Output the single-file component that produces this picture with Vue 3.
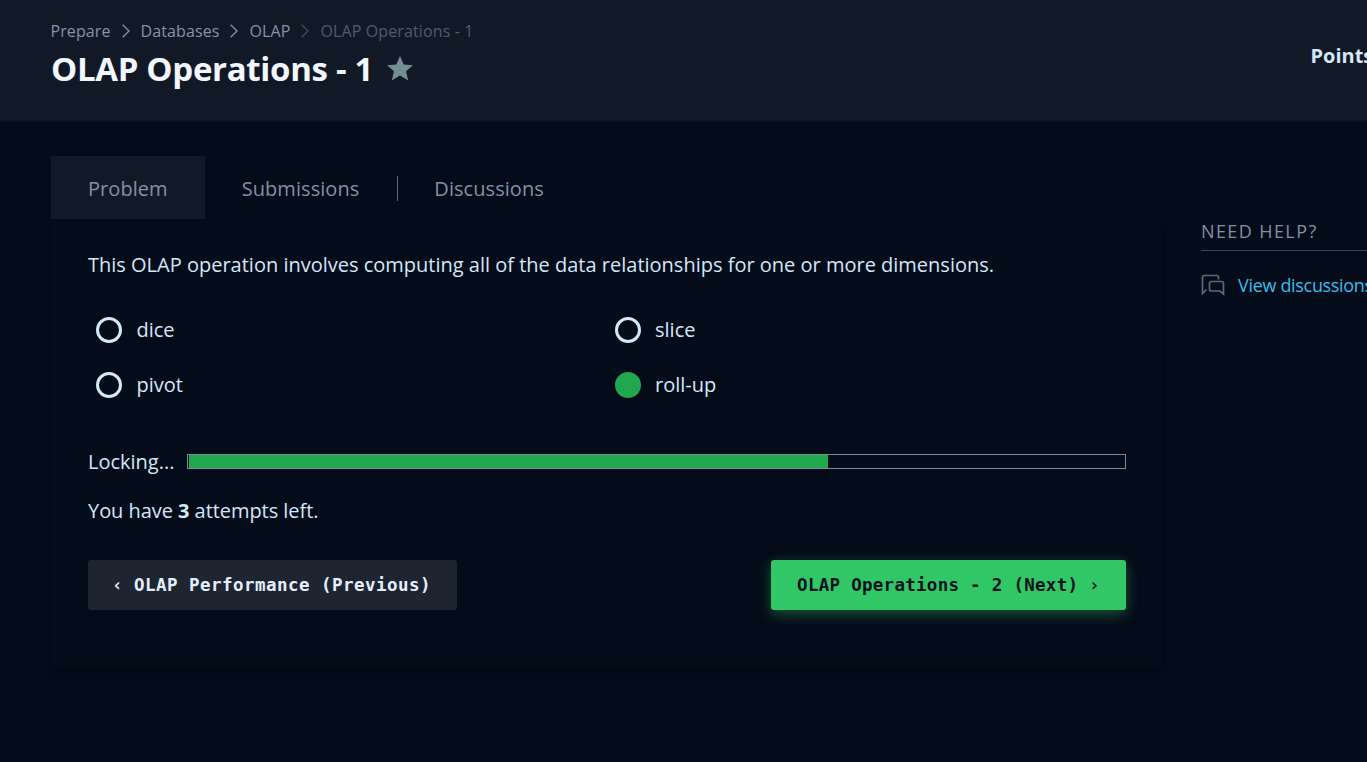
<script setup>
const crumbs = ['Prepare', 'Databases', 'OLAP', 'OLAP Operations - 1']
const options = ['dice', 'slice', 'pivot', 'roll-up']
const selected = 'roll-up'
const progress = 68.3
</script>

<template>
  <div class="page">
    <header class="header">
      <div>
        <nav class="crumbs">
          <template v-for="(c, i) in crumbs" :key="c">
            <svg v-if="i" class="chev" :class="{ dim: i === 3 }" width="8" height="14" viewBox="0 0 8 14"><path d="M0.7 0.7 7 7 0.7 13.3" /></svg>
            <span :class="['crumb', { dim: i === 3 }]">{{ c }}</span>
          </template>
        </nav>
        <div class="title-row">
          <h1>OLAP Operations - 1</h1>
          <svg class="star" width="26" height="25" viewBox="0 0 26 25"><path d="M13 0 16.7 8.5 26 9.3 19 15.3 21.2 24.4 13 19.5 4.8 24.4 7 15.3 0 9.3 9.3 8.5Z" /></svg>
        </div>
      </div>
      <div class="points">Points</div>
    </header>
    <div class="body">
      <main class="main">
        <div class="tabs">
          <div class="tab active">Problem</div>
          <div class="tab">Submissions</div>
          <div class="sep"></div>
          <div class="tab">Discussions</div>
        </div>
        <section class="panel">
          <p class="question">This OLAP operation involves computing all of the data relationships for one or more dimensions.</p>
          <div class="options">
            <label v-for="o in options" :key="o" class="option">
              <span class="radio" :class="{ on: o === selected }"></span>{{ o }}
            </label>
          </div>
          <div class="locking">
            <span class="lock-label">Locking...</span>
            <div class="bar"><div class="fill" :style="{ width: progress + '%' }"></div></div>
          </div>
          <p class="attempts">You have <b>3</b> attempts left.</p>
          <div class="actions">
            <button class="btn prev">‹ OLAP Performance (Previous)</button>
            <button class="btn next">OLAP Operations - 2 (Next) ›</button>
          </div>
        </section>
      </main>
      <aside class="side">
        <div class="help">NEED HELP?</div>
        <div class="discuss">
          <svg width="24" height="22" viewBox="0 0 24 22"><path d="M5.5 15.5 1.5 19.5V3.5Q1.5 1.5 3.5 1.5H15.5Q17.5 1.5 17.5 3.5V5.5M10.5 7.5H20.5Q22.5 7.5 22.5 9.5V20L19 17H10.5Q8.5 17 8.5 15V9.5Q8.5 7.5 10.5 7.5Z" /></svg>
          <span>View discussions</span>
        </div>
      </aside>
    </div>
  </div>
</template>

<style>
body { background: #040b19; }
</style>

<style scoped>
.page { width: 100%; height: 762px; overflow: hidden; background: #040b19; color: #d4e7fb; font-family: "Open Sans", "Noto Sans", sans-serif; font-size: 20px; }
p, h1 { margin: 0; }
.header { height: 120px; box-sizing: border-box; padding: 20px 0 0 51px; background: #121926; box-shadow: 0 1px 3px #161c29; display: flex; justify-content: space-between; }
.crumbs { display: flex; align-items: center; height: 22px; font-size: 16px; color: #8791a8; white-space: nowrap; margin-left: -.5px; }
.crumb { letter-spacing: .1px; }
.chev { margin: 0 11px; fill: none; stroke: #8791a8; stroke-width: 1.3; }
.chev.dim { stroke: #454d5d; }
.crumb.dim { color: #535b6b; letter-spacing: .12px; }
.title-row { display: flex; align-items: center; height: 48px; margin-top: 3px; }
h1 { font-size: 33px; line-height: 48px; letter-spacing: -.32px; color: #f1f6ff; white-space: nowrap; }
.star { margin: -1px 0 0 14px; fill: #738f93; }
.points { width: 56.5px; margin-top: 22px; font-size: 20px; line-height: 28px; font-weight: 700; white-space: nowrap; }
.body { display: flex; padding: 36px 0 0 51px; }
.main { width: 1112px; flex: none; }
.tabs { display: flex; align-items: center; height: 63px; color: #8490a8; }
.tab { height: 63px; line-height: 65px; padding: 0 37px; white-space: nowrap; letter-spacing: .06px; }
.tab.active { background: #121926; }
.sep { width: 1px; height: 25px; margin: 2px -1px 0 1px; background: #646b78; }
.panel { height: 447px; box-sizing: border-box; padding: 31px 37px 0; box-shadow: 0 5px 9px rgba(0, 0, 0, .16); }
.question { line-height: 30px; white-space: nowrap; }
.options { display: grid; grid-template-columns: 518.5px 1fr; grid-auto-rows: 55px; margin-top: 22px; }
.option { display: flex; align-items: center; padding-left: 8px; }
.radio { width: 26px; height: 26px; box-sizing: border-box; border: 3px solid #d4e7fb; border-radius: 50%; margin-right: 14.5px; }
.radio.on { border-color: #1fa84d; background: #1fa84d; }
.locking { display: flex; align-items: center; height: 30px; margin-top: 34px; }
.lock-label { width: 99px; }
.bar { flex: 1; height: 15px; box-sizing: border-box; border: 1px solid #738f93; padding-left: 1px; }
.fill { height: 13px; background: #1fa84d; }
.attempts { line-height: 30px; margin-top: 20px; letter-spacing: -.05px; }
.actions { display: flex; justify-content: space-between; margin-top: 34px; }
.btn { height: 50px; padding: 0 0 1px; border: 0; border-radius: 3px; font: 700 17.5px "DejaVu Sans Mono", monospace; white-space: nowrap; }
.prev { width: 369px; background: #1e2531; color: #e3efff; letter-spacing: .47px; padding-right: 2px; }
.next { width: 355px; background: #32c766; color: #07111f; letter-spacing: .28px; box-shadow: 0 4px 14px rgba(50, 199, 102, .4); }
.side { margin-left: 38px; padding-top: 63px; width: 300px; flex: none; }
.help { font-size: 18px; line-height: 24px; height: 31px; letter-spacing: 1.4px; color: #8490a8; border-bottom: 1px solid #394150; }
.discuss { display: flex; align-items: center; height: 30px; margin-top: 19px; font-size: 18px; letter-spacing: -.32px; color: #38bdec; white-space: nowrap; }
.discuss svg { fill: none; stroke: #606875; stroke-width: 1.7; margin-right: 13px; }
</style>
